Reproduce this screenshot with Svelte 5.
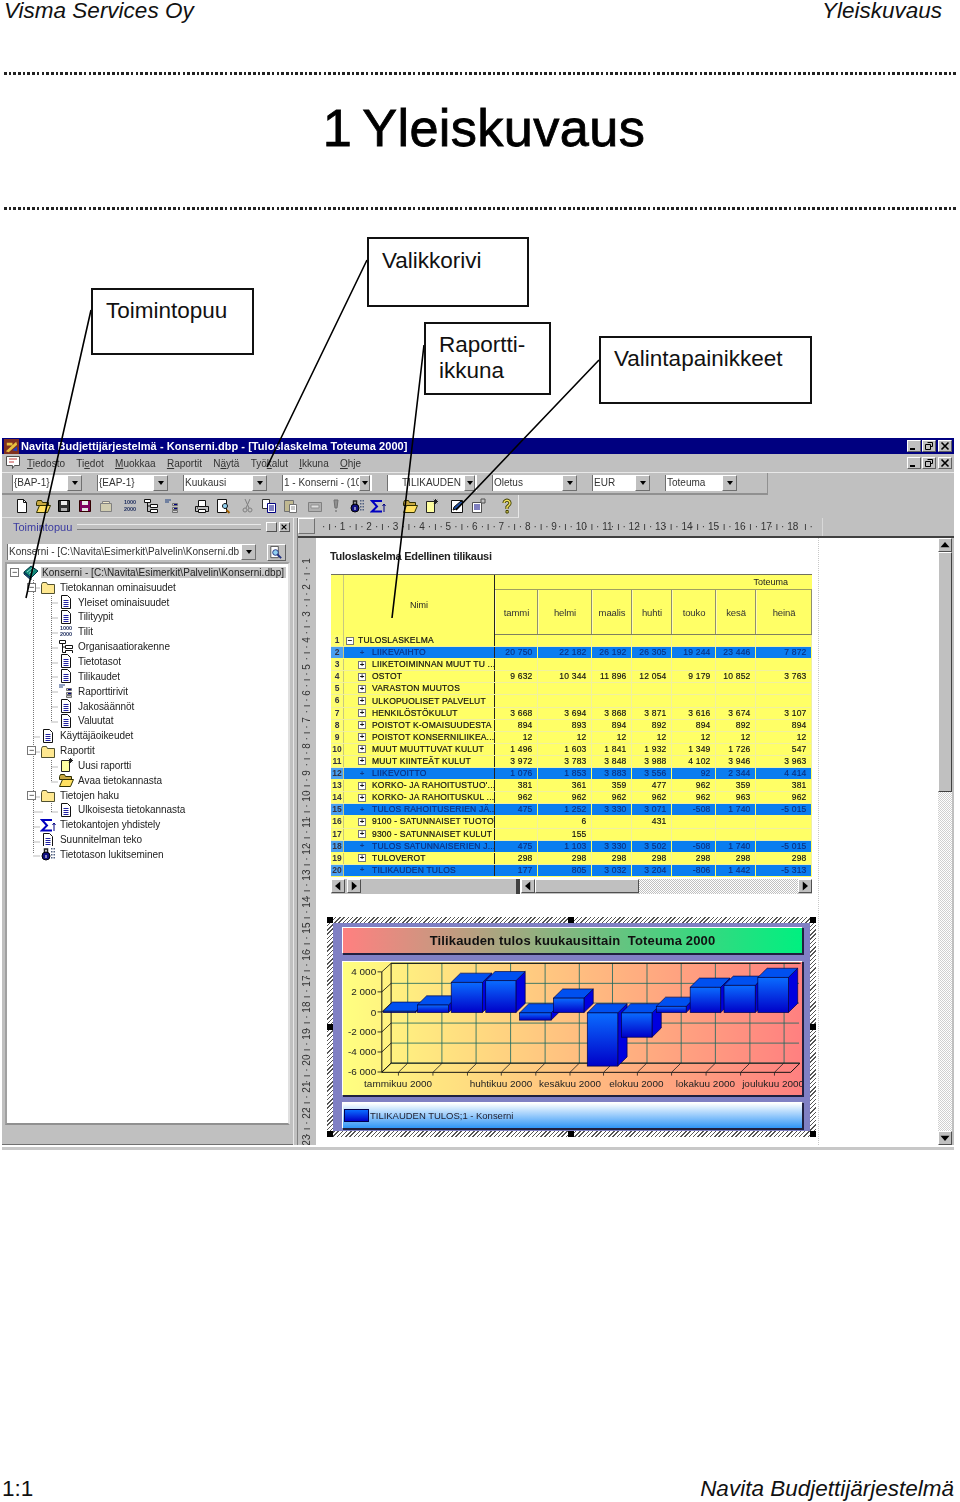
<script>
  const I = {
    doc: [["M3.5 1.5h6l3 3v10h-9z","#fff","#111"],["M5.5 6.5h5M5.5 8.5h5M5.5 10.5h5M5.5 12.5h5","none","#2020a0"]],
    blank: [["M3.5 1.5h6l3 3v10h-9z","#fff","#111"],["M9.5 1.5v3h3","none","#111"]],
    folder: [["M1.5 5.5l1-2h4l1 2h7v9h-13z","#ffe890","#505030"]],
    book: [["M1 8l7-6 7 5-7 7z","#108878","#003040"],["M1 8l7 6v2l-7-6z","#205090","#003040"],["M4 8l5-4M6 9.5l5-4","none","#90e0d0"]],
    sigma: [["M12 3H2l5 5.5L2 13.5h10","none","#0000c0",2],["M14 14V6M12.5 8l1.5-2 1.5 2","none","#000080"]],
    org: [["M1.5 1.5h6v3h-6z","#fff","#111"],["M7.5 6.5h7v3h-7zM7.5 11.5h7v3h-7z","#fff","#111"],["M4.5 4.5v9h3M4.5 8h3","none","#111"]],
    rows: [["M1 2h6M1 4h4","none","#204080"],["M8.5 5.5h5v2h-5zM8.5 9.5h5v2h-5zM8.5 12.5h5v2h-5z","#d0d0d0","#707070"],["M10 6h3v1h-3zM10 10h3v1h-3z","#000080","none"]],
    newrep: [["M3.5 3.5h8v11h-8z","#ffffa0","#222"],["M12.5 1v5M10 3.5h5M10.8 1.8l3.4 3.4M14.2 1.8l-3.4 3.4","none","#222"]],
    openf: [["M1.5 4.5l1-2h4l1 2h6v3h-12z","#c8a840","#303000"],["M1.5 14.5l3-7h11l-3 7z","#ffe060","#303000"]],
    lock: [["M2 10a4 4 0 1 0 8 0a4 4 0 1 0-8 0z","#101080","#000"],["M4.5 6V3h3v3","none","#202020",1.5],["M11 2h1.5v1.5H11zM13.5 2H15v1.5h-1.5zM11 5h1.5v1.5H11zM13.5 5H15v1.5h-1.5zM11 8h1.5v1.5H11zM13.5 8H15v1.5h-1.5zM11 11h1.5v1.5H11zM13.5 11H15v1.5h-1.5z","#506080","none"],["M5.5 9h1v3h-1z","#fff","none"]],
    save: [["M2.5 2.5h11v11h-11z","#303030","#000"],["M5 3h6v4H5z","#e8e8e8","none"],["M5 10h6v3H5z","#b0b0b0","none"]],
    save2: [["M2.5 2.5h11v11h-11z","#800060","#300"],["M5 3h6v4H5z","#e8e8e8","none"],["M5 10h6v3H5z","#e0e0e0","none"]],
    clip: [["M2.5 5.5h11v8h-11z","#d0ccb0","#808080"],["M4.5 3.5h7v2h-7z","#f0e8c8","#808080"]],
    print: [["M1.5 8.5h13v5h-13z","#c0c0c0","#111"],["M4.5 2.5h7v6h-7zM4.5 11.5h7v3h-7z","#fff","#111"],["M3 10h1","none","#111"]],
    preview: [["M2.5 1.5h9v13h-9z","#fff","#111"],["M10 10.5a2.5 2.5 0 1 0-.01 0z","#90d0f0","#111"],["M11.5 12l3 3","none","#a06000",2]],
    cut: [["M5 1l4 9M10 1L6 10","none","#808080"],["M3 12a2 2 0 1 0 4 0a2 2 0 1 0-4 0zM8 12a2 2 0 1 0 4 0a2 2 0 1 0-4 0z","none","#808080"]],
    copy: [["M1.5 1.5h7v9h-7z","#fff","#303030"],["M6.5 5.5h8v9h-8z","#fff","#000080"],["M8 8h5M8 10h5M8 12h5","none","#000080"]],
    paste: [["M2.5 2.5h9v11h-9z","#c0b890","#707070"],["M7.5 6.5h7v8h-7z","#fff","#707070"],["M9 9h4M9 11h4","none","#909090"]],
    gray: [["M1.5 4.5h13v9h-13z","#b0b0b0","#808080"],["M4 7h8v3H4z","#e0e0e0","#909090"]],
    excl: [["M6 2h4l-1 8H7z","#909090","#707070"],["M7 12h2v2H7z","#909090","none"]],
    edit: [["M2.5 2.5h11v12h-11z","#fff","#111"],["M4 12l1-3 7-6 2 2-7 6z","#2050a0","#111"]],
    props: [["M2.5 4.5h9v10h-9z","#fff","#505050"],["M4 7h6M4 9h6M4 11h6","none","#000080"],["M11 1h4v4h-4z","#c0c0c0","#505050"]],
    help: [["M5 5a3 2.8 0 1 1 4.6 2.4L8 9v2","none","#404000",3.2],["M5 5a3 2.8 0 1 1 4.6 2.4L8 9v2","none","#f0e060",1.4],["M7 12.5h2.2v2.5H7z","#f0e060","#404000"]]
  };
  const menu = [["","T","iedosto"],["Ti","e","dot"],["","M","uokkaa"],["","R","aportit"],["N","ä","ytä"],["Työ","k","alut"],["","I","kkuna"],["","O","hje"]];
  const combos = [["{BAP-1}",70],["{EAP-1}",71],["Kuukausi",84],["1 - Konserni - (10",90,"","nar"],["TILIKAUDEN",90,"pad","nar"],["Oletus",85],["EUR",58],["Toteuma",72]];
  const tools = [
    [0,["blank","openf","save","save2","clip"]],
    [8,["nums","org","rows"]],
    [14,["print","preview"]],
    [9,["cut","copy","paste"]],
    [9,["gray","excl","lock","sigma"]],
    [16,["openf","newrep"]],
    [10,["edit","props"]],
    [13,["help"]]
  ];
  const tree = [
    [0,"book","Konserni - [C:\\Navita\\Esimerkit\\Palvelin\\Konserni.dbp]",1],
    [1,"folder","Tietokannan ominaisuudet",1],
    [2,"doc","Yleiset ominaisuudet"],
    [2,"doc","Tilityypit"],
    [2,"nums","Tilit"],
    [2,"org","Organisaatiorakenne"],
    [2,"doc","Tietotasot"],
    [2,"doc","Tilikaudet"],
    [2,"rows","Raporttirivit"],
    [2,"doc","Jakosäännöt"],
    [2,"doc","Valuutat"],
    [1,"doc","Käyttäjäoikeudet"],
    [1,"folder","Raportit",1],
    [2,"newrep","Uusi raportti"],
    [2,"openf","Avaa tietokannasta"],
    [1,"folder","Tietojen haku",1],
    [2,"doc","Ulkoisesta tietokannasta"],
    [1,"sigma","Tietokantojen yhdistely"],
    [1,"doc","Suunnitelman teko"],
    [1,"lock","Tietotason lukitseminen"]
  ];
  const months = ["tammi","helmi","maalis","huhti","touko","kesä","heinä"];
  const rows = [
    ["TULOSLASKELMA",[],0,1],
    ["LIIKEVAIHTO",["20 750","22 182","26 192","26 305","19 244","23 446","7 872"],1],
    ["LIIKETOIMINNAN MUUT TU ...",[]],
    ["OSTOT",["9 632","10 344","11 896","12 054","9 179","10 852","3 763"]],
    ["VARASTON MUUTOS",[]],
    ["ULKOPUOLISET PALVELUT",[]],
    ["HENKILÖSTÖKULUT",["3 668","3 694","3 868","3 871","3 616","3 674","3 107"]],
    ["POISTOT K-OMAISUUDESTA",["894","893","894","892","894","892","894"]],
    ["POISTOT KONSERNILIIKEA...",["12","12","12","12","12","12","12"]],
    ["MUUT MUUTTUVAT KULUT",["1 496","1 603","1 841","1 932","1 349","1 726","547"]],
    ["MUUT KIINTEÄT KULUT",["3 972","3 783","3 848","3 988","4 102","3 946","3 963"]],
    ["LIIKEVOITTO",["1 076","1 853","3 883","3 556","92","2 344","4 414"],1],
    ["KORKO- JA RAHOITUSTUO'...",["381","361","359","477","962","359","381"]],
    ["KORKO- JA RAHOITUSKUL ...",["962","962","962","962","962","963","962"]],
    ["TULOS RAHOITUSERIEN JÄ...",["475","1 252","3 330","3 071","-508","1 740","-5 015"],1],
    ["9100 - SATUNNAISET TUOTOT",["","6","","431"]],
    ["9300 - SATUNNAISET KULUT",["","155"]],
    ["TULOS SATUNNAISERIEN J...",["475","1 103","3 330","3 502","-508","1 740","-5 015"],1],
    ["TULOVEROT",["298","298","298","298","298","298","298"]],
    ["TILIKAUDEN TULOS",["177","805","3 032","3 204","-806","1 442","-5 313"],1]
  ];
  const bars = [[187,285,333,337],[290,384,314,337],[392,486,245,337],[496,587,240,337],[598,693,338,360],[700,792,293,337],[802,894,338,500],[905,997,338,412],[1010,1100,318,337],[1112,1204,260,337],[1214,1308,254,337],[1316,1408,230,337]];
  const yLabels = [["4 000",222],["2 000",284],["0",346],["-2 000",406],["-4 000",466],["-6 000",528]];
  const xLabels = [["tammikuu 2000",232],["huhtikuu 2000",542],["kesäkuu 2000",750],["elokuu 2000",950],["lokakuu 2000",1158],["joulukuu 2000",1362]];
  const vx = [261,364,467,571,675,778,878,982,1085,1188,1292,1395];
  const hy = [187,248,308,369,430,491];
  const fx = [233,337,441,543,647,750,851,953,1056,1160,1264,1366];
  const treeGuides = "M26.5 14V290M26.5 24H36M26.5 173H36M26.5 188H36M26.5 233H36M26.5 248H36M26.5 263H36M26.5 278H36M26.5 292H36M44.5 30V158M44.5 39H54M44.5 54H54M44.5 69H54M44.5 84H54M44.5 99H54M44.5 113H54M44.5 128H54M44.5 143H54M44.5 158H54M44.5 188V218M44.5 203H54M44.5 218H54M44.5 233V248M44.5 248H54";
</script>

{#snippet icon(k)}
  {#if k === "nums"}
    <span class="nums">1000<br />2000</span>
  {:else}
    <svg class="ico" viewBox="0 0 16 16" aria-hidden="true">
      {#each I[k] as [d, fill, stroke, w]}
        <path {d} {fill} {stroke} stroke-width={w || 1} />
      {/each}
    </svg>
  {/if}
{/snippet}

{#snippet winbtns()}
  <div class="winbtns">
    <span class="wb"><svg viewBox="0 0 12 10"><path d="M2 8h5" stroke="#000" stroke-width="2" /></svg></span>
    <span class="wb"><svg viewBox="0 0 12 10"><path d="M4.5 1.5h5v4h-2M2.5 3.5h5v5h-5z" fill="none" stroke="#000" /></svg></span>
    <span class="wb x"><svg viewBox="0 0 12 10"><path d="M2.5 1.5l7 7M9.5 1.5l-7 7" fill="none" stroke="#000" stroke-width="1.6" /></svg></span>
  </div>
{/snippet}

{#snippet arrowbtn()}
  <span class="arrow"><svg viewBox="0 0 8 5"><path d="M1 0h6L4 4z" fill="#000" /></svg></span>
{/snippet}

<div class="page">
  <header class="head">
    <span>Visma Services Oy</span>
    <span>Yleiskuvaus</span>
  </header>
  <div class="dots"></div>
  <h1>1 Yleiskuvaus</h1>
  <div class="dots"></div>
  <div class="calloutspace"></div>

  <section class="shot">
    <div class="titlebar">
      <svg class="appico" viewBox="0 0 16 16"><path d="M0 0h16v16H0z" fill="#803020" /><path d="M2 13L13 3l1 3-9 8zM3 4h6v3H3z" fill="#e8c040" /><path d="M9 12l5-4v5z" fill="#2040c0" /></svg>
      <span class="ttl">Navita Budjettijärjestelmä - Konserni.dbp - [Tuloslaskelma Toteuma 2000]</span>
      {@render winbtns()}
    </div>
    <div class="menubar">
      <svg class="docico" viewBox="0 0 16 16"><path d="M1.5 1.5h13v9h-5l-2 3v-3h-6z" fill="#fff" stroke="#505050" /><path d="M4 4h8M4 7h5" stroke="#c04040" /></svg>
      <nav class="menu">
        {#each menu as [a, b, c]}
          <span>{a}<u>{b}</u>{c}</span>
        {/each}
      </nav>
      {@render winbtns()}
    </div>
    <div class="bars">
      <div class="bar1">
        {#each combos as [t, w, p, n]}
          <div class="combo" class:nar={n} style:width="{w}px">
            <span class="cval" class:pad={p}>{t}</span>
            {@render arrowbtn()}
          </div>
        {/each}
      </div>
      <div class="bar2">
        {#each tools as [m, list]}
          <div class="tgroup" style:margin-left="{m}px">
            {#each list as k}{@render icon(k)}{/each}
          </div>
        {/each}
      </div>
    </div>

    <div class="body">
      <aside class="left">
        <div class="dockhead">
          <span class="docktitle">Toimintopuu</span>
          <span class="grip"></span>
          <span class="mini"></span>
          <span class="mini"><svg viewBox="0 0 10 10"><path d="M2 2l6 6M8 2l-6 6" stroke="#000" stroke-width="1.5" /></svg></span>
        </div>
        <div class="dockcombo">
          <div class="combo wide">
            <span class="cval">Konserni - [C:\Navita\Esimerkit\Palvelin\Konserni.db</span>
            {@render arrowbtn()}
          </div>
          <span class="searchbtn">
            <svg viewBox="0 0 16 16"><path d="M3 1.5h8v12H3z" fill="#fff" stroke="#505050" /><circle cx="8" cy="8" r="3" fill="#90d0f0" stroke="#203080" /><path d="M10 10l4 4" stroke="#203080" stroke-width="2" /></svg>
          </span>
        </div>
        <div class="tree">
          <svg class="guides" viewBox="0 0 285 560"><path d={treeGuides} fill="none" stroke="#777" stroke-dasharray="1 1" /></svg>
          {#each tree as [lvl, k, text, exp]}
            <div class="tnode l{lvl}">
              <span class="exp" class:on={exp}>{exp ? "−" : ""}</span>
              {@render icon(k)}
              <span class="tlabel" class:sel={lvl === 0}>{text}</span>
            </div>
          {/each}
        </div>
        <div class="statusfill"></div>
      </aside>

      <div class="split"></div>

      <main class="right">
        <div class="rulerrow">
          <span class="corner"></span>
          <div class="hruler">
            {#each Array.from({ length: 18 }, (_, i) => i + 1) as n}
              <span>· ı · {n}</span>
            {/each}
            <span class="tail">ı ·</span>
          </div>
        </div>
        <div class="work">
          <div class="vruler">
            {#each Array.from({ length: 23 }, (_, i) => i + 1) as n}
              <span>· ı · {n}</span>
            {/each}
          </div>
          <div class="doc">
            <div class="sheet">
              <div class="rtitle">Tuloslaskelma Edellinen tilikausi</div>
              <div class="rep">
                <div class="rephead">
                  <div class="hnum"></div>
                  <div class="hname">Nimi</div>
                  <div class="hright">
                    <div class="hband">Toteuma</div>
                    <div class="hmonths">
                      {#each months as m}<span>{m}</span>{/each}
                    </div>
                  </div>
                </div>
                {#each rows as [name, vals, blue, top], i}
                  <div class="row" class:blue>
                    <span class="num">{i + 1}</span>
                    <span class="name" class:top>
                      <span class="box">{top ? "−" : "+"}</span><span class="nm">{name}</span>
                    </span>
                    {#each months as _, c}
                      <span class="val">{vals[c] || ""}</span>
                    {/each}
                  </div>
                {/each}
              </div>
              <div class="hscroll">
                <span class="sb"><svg viewBox="0 0 8 8"><path d="M5.5 1v6L2 4z" /></svg></span>
                <span class="sb"><svg viewBox="0 0 8 8"><path d="M2.5 1v6L6 4z" /></svg></span>
                <span class="trk"></span>
                <span class="splitbar"></span>
                <span class="sb"><svg viewBox="0 0 8 8"><path d="M5.5 1v6L2 4z" /></svg></span>
                <span class="thumb"></span>
                <span class="dither"></span>
                <span class="sb"><svg viewBox="0 0 8 8"><path d="M2.5 1v6L6 4z" /></svg></span>
              </div>

              <div class="chartframe">
                <span class="h tl"></span><span class="h tc"></span><span class="h tr"></span>
                <span class="h ml"></span><span class="h mr"></span>
                <span class="h bl"></span><span class="h bc"></span><span class="h br"></span>
                <div class="chartin">
                  <div class="cpanel ctitle">Tilikauden tulos kuukausittain&nbsp; Toteuma 2000</div>
                  <div class="cpanel cplot">
                    <svg viewBox="66 183 1383 405" preserveAspectRatio="none">
                      <defs>
                        <linearGradient id="barf" x1="0" y1="0" x2="0" y2="1">
                          <stop offset="0" stop-color="#0a6cff" /><stop offset="1" stop-color="#0000c8" />
                        </linearGradient>
                      </defs>
                      {#each hy as y}
                        <path d="M211 {y}H1440" stroke="#1d6a60" stroke-width="2.5" fill="none" />
                      {/each}
                      {#each vx as x}
                        <path d="M{x} 187V491" stroke="#1d6a60" stroke-width="2.5" fill="none" />
                      {/each}
                      {#each hy as y, i}
                        <path d="M183 {213 + i * 61}L211 {y}" stroke="#111" stroke-width="2.5" fill="none" />
                        <path d="M170 {213 + i * 61}H183" stroke="#111" stroke-width="2.5" fill="none" />
                      {/each}
                      <path d="M211 187V491L183 519V213M183 519H1415L1443 491H211" stroke="#111" stroke-width="3" fill="none" />
                      <path d="M211 187H1445" stroke="#111" stroke-width="3" fill="none" />
                      {#each fx as x}
                        <path d="M{x} 529V519L{x + 28} 491" stroke="#222" stroke-width="2.5" fill="none" />
                      {/each}
                      {#each bars as [x1, x2, y1, y2]}
                        <path d="M{x2} {y1}l28-28V{y2 - 28}l-28 28z" fill="#0000e0" stroke="#000040" stroke-width="2" />
                        <path d="M{x1} {y1}l28-28H{x2 + 28}l-28 28z" fill="#0050f0" stroke="#000040" stroke-width="2" />
                        <rect x={x1} y={y1} width={x2 - x1} height={y2 - y1} fill="url(#barf)" stroke="#000040" stroke-width="2" />
                      {/each}
                      {#each yLabels as [t, y]}
                        <text x="166" {y} text-anchor="end" class="ct">{t}</text>
                      {/each}
                      {#each xLabels as [t, x]}
                        <text {x} y="563" text-anchor="middle" class="ct">{t}</text>
                      {/each}
                    </svg>
                  </div>
                  <div class="cpanel clegend">
                    <span class="swatch"></span>
                    <span>TILIKAUDEN TULOS;1 - Konserni</span>
                  </div>
                </div>
              </div>
            </div>
          </div>
          <div class="vscroll">
            <span class="sb"><svg viewBox="0 0 8 8"><path d="M1 5.5h6L4 2z" /></svg></span>
            <span class="vthumb"></span>
            <span class="vtrack"></span>
            <span class="sb"><svg viewBox="0 0 8 8"><path d="M1 2.5h6L4 6z" /></svg></span>
          </div>
        </div>
      </main>
    </div>
    <div class="strip"></div>
  </section>

  <div class="spacer"></div>
  <footer class="foot">
    <span>1:1</span>
    <em>Navita Budjettijärjestelmä</em>
  </footer>

  <svg class="leaders" viewBox="0 0 960 1502" aria-hidden="true">
    <path d="M91 310L26 598M367 260L267 467M424 345L392 618M599 360L456 510" fill="none" stroke="#000" stroke-width="1.6" />
  </svg>
  <div class="callout c1">Toimintopuu</div>
  <div class="callout c2">Valikkorivi</div>
  <div class="callout c3">Raportti-<br />ikkuna</div>
  <div class="callout c4">Valintapainikkeet</div>
</div>

<style>
  :global(body) { margin: 0; background: #fff; }
  .page {
    position: relative;
    width: 960px;
    height: 1502px;
    overflow: hidden;
    background: #fff;
    color: #000;
    font-family: "Liberation Sans", Arial, sans-serif;
  }
  .head {
    height: 72px;
    box-sizing: border-box;
    padding: 0 18px 0 4px;
    display: flex;
    justify-content: space-between;
    font-size: 22.5px;
    line-height: 22px;
    font-style: italic;
    color: #111;
  }
  .dots {
    height: 3px;
    margin: 0 2px 0 4px;
    background: repeating-linear-gradient(90deg, #222 0 2.6px, transparent 2.6px 4.7px);
  }
  h1 {
    margin: 0;
    height: 132px;
    box-sizing: border-box;
    padding: 25px 0 0 8px;
    font-size: 52.3px;
    font-weight: 400;
    line-height: 56px;
    text-align: center;
    word-spacing: -4px;
    letter-spacing: 0.35px;
    -webkit-text-stroke: 0.8px #000;
  }
  .calloutspace { height: 228px; }

  .shot {
    margin-left: 2px;
    width: 952px;
    height: 712px;
    display: flex;
    flex-direction: column;
    background: #c0c0c0;
    filter: blur(0.4px);
    font-size: 10px;
    color: #222;
  }
  .titlebar {
    height: 16px;
    flex: none;
    background: #000080;
    display: flex;
    align-items: center;
    padding-left: 2px;
    box-sizing: border-box;
  }
  .appico { width: 15px; height: 15px; margin-right: 2px; }
  .ttl {
    color: #fff;
    font-weight: 700;
    font-size: 11px;
    letter-spacing: 0.05px;
    white-space: nowrap;
  }
  .winbtns { margin-left: auto; display: flex; gap: 1px; margin-right: 2px; }
  .wb {
    width: 14px;
    height: 12px;
    background: #c0c0c0;
    box-sizing: border-box;
    border: 1px solid;
    border-color: #fff #606060 #606060 #fff;
    display: flex;
  }
  .wb.x { margin-left: 1px; }
  .wb svg { width: 100%; height: 100%; }
  .menubar {
    height: 19px;
    flex: none;
    display: flex;
    align-items: center;
    padding-left: 3px;
    box-sizing: border-box;
    border-bottom: 1px solid #e8e8e8;
  }
  .docico { width: 16px; height: 16px; }
  .menu {
    display: flex;
    gap: 11.3px;
    margin-left: 6px;
    font-size: 10px;
    white-space: nowrap;
    color: #333;
    padding-top: 1px;
  }
  .bars { flex: none; height: 45px; position: relative; }
  .bar1 {
    width: 766px;
    height: 22px;
    box-sizing: border-box;
    padding: 2px 0 0 10px;
    display: flex;
    gap: 15px;
    border-bottom: 2px solid #909090;
    border-right: 1px solid #909090;
  }
  .combo {
    height: 16px;
    flex: none;
    box-sizing: border-box;
    display: flex;
    background: #fff;
    border-left: 1px solid #707070;
    position: relative;
  }
  .combo.wide { width: 249px; }
  .cval {
    flex: 1;
    min-width: 0;
    overflow: hidden;
    white-space: nowrap;
    font-size: 10px;
    line-height: 16px;
    padding-left: 1px;
    color: #333;
  }
  .cval.pad { padding-left: 14px; }
  .arrow {
    flex: none;
    width: 15px;
    height: 16px;
    background: #c0c0c0;
    box-sizing: border-box;
    border: 1px solid;
    border-color: #fff #707070 #707070 #fff;
    display: flex;
    align-items: center;
    justify-content: center;
  }
  .nar .arrow { width: 11px; margin-right: 2px; }
  .arrow svg { width: 8px; height: 5px; }
  .bar2 {
    width: 517px;
    height: 23px;
    box-sizing: border-box;
    padding: 3px 0 0 12px;
    display: flex;
    border-bottom: 1px solid #e0e0e0;
    border-right: 1px solid #e8e8e8;
  }
  .tgroup { display: flex; gap: 5px; }
  .ico { width: 16px; height: 16px; flex: none; }
  .nums {
    width: 16px;
    height: 16px;
    flex: none;
    font-size: 5.5px;
    font-weight: 700;
    line-height: 6.5px;
    text-align: center;
    color: #203060;
    padding-top: 1px;
    box-sizing: border-box;
  }

  .body { flex: 1; min-height: 0; display: flex; }
  .left { width: 291px; flex: none; display: flex; flex-direction: column; }
  .dockhead {
    height: 18px;
    flex: none;
    display: flex;
    align-items: center;
    padding: 0 3px 0 11px;
    gap: 2px;
  }
  .docktitle { font-size: 11px; color: #3a3aa0; }
  .grip {
    flex: 1;
    height: 4px;
    margin: 0 3px;
    border-top: 1px solid #e8e8e8;
    border-bottom: 1px solid #808080;
  }
  .mini {
    width: 11px;
    height: 10px;
    box-sizing: border-box;
    border: 1px solid;
    border-color: #fff #505050 #505050 #fff;
    display: flex;
  }
  .dockcombo {
    height: 26px;
    flex: none;
    box-sizing: border-box;
    padding: 8px 0 0 5px;
    display: flex;
  }
  .searchbtn {
    width: 19px;
    height: 17px;
    margin-left: 11px;
    box-sizing: border-box;
    border: 1px solid;
    border-color: #fff #606060 #606060 #fff;
    display: flex;
  }
  .tree {
    position: relative;
    margin-left: 3px;
    flex: none;
    height: 563px;
    width: 285px;
    box-sizing: border-box;
    padding-top: 1px;
    background: #fff;
    border: 2px solid;
    border-color: #a0a0a0 #e0e0e0 #909090 #a0a0a0;
  }
  .guides { position: absolute; inset: 0 auto auto 0; width: 285px; height: 560px; }
  .tnode {
    position: relative;
    height: 14.85px;
    display: flex;
    align-items: center;
    font-size: 10px;
    letter-spacing: -0.05px;
    white-space: nowrap;
    color: #222;
  }
  .tnode .ico, .tnode .nums { background: #fff; }
  .l0 { padding-left: 3px; }
  .l1 { padding-left: 20px; }
  .l2 { padding-left: 38px; }
  .exp {
    width: 9px;
    height: 9px;
    margin-right: 4px;
    flex: none;
    box-sizing: border-box;
    font-size: 9px;
    line-height: 7px;
    text-align: center;
    color: #111;
  }
  .exp.on { border: 1px solid #777; background: #fff; }
  .tlabel { margin-left: 4px; }
  .tlabel.sel { background: #c8c8c8; padding: 0 2px 0 1px; margin-left: 2px; letter-spacing: 0.07px; }
  .statusfill { flex: 1; border-bottom: 1px solid #707070; }
  .split {
    width: 5px;
    flex: none;
    border-right: 1px solid #808080;
    border-left: 1px solid #e8e8e8;
    box-sizing: border-box;
  }

  .right { flex: 1; min-width: 0; display: flex; flex-direction: column; }
  .rulerrow { height: 18px; flex: none; display: flex; }
  .corner {
    width: 17px;
    height: 16px;
    box-sizing: border-box;
    border: 1px solid;
    border-color: #fff #707070 #707070 #fff;
    margin-right: 5px;
  }
  .hruler { display: flex; font-size: 10px; line-height: 18px; color: #333; width: 502px; border-right: 1px solid #d8d8d8; white-space: nowrap; }
  .hruler span { width: 26.45px; text-align: right; flex: none; padding-right: 1px; box-sizing: border-box; }
  .hruler .tail { width: 18px; }
  .work { flex: 1; min-height: 0; display: flex; border-top: 2px solid #404040; border-left: 0; }
  .vruler {
    width: 18px;
    flex: none;
    box-sizing: border-box;
    padding-top: 17px;
    display: flex;
    flex-direction: column;
    overflow: hidden;
    font-size: 10px;
    color: #333;
  }
  .vruler span {
    height: 26.45px;
    flex: none;
    writing-mode: vertical-rl;
    transform: rotate(180deg);
    text-align: left;
    white-space: nowrap;
    line-height: 18px;
  }
  .doc { flex: 1; min-width: 0; background: #fff; overflow: hidden; }
  .sheet {
    width: 503px;
    height: 100%;
    box-sizing: border-box;
    padding: 12px 0 0 15px;
    border-right: 1px dotted #c8c8c8;
  }
  .rtitle {
    margin-left: -1px;
    height: 24px;
    font-size: 11px;
    line-height: 13px;
    font-weight: 700;
    letter-spacing: -0.28px;
    color: #222;
  }
  .rep {
    --cols: 13px 151px 43px 54px 40px 40px 44px 40px 56px;
    width: 481px;
    background: #ffff66;
    border-top: 1px solid #707060;
    font-size: 8.5px;
  }
  .rephead { display: flex; height: 60px; }
  .hnum { width: 13px; flex: none; border-right: 1px solid #c8c880; box-sizing: border-box; }
  .hname {
    width: 151px;
    flex: none;
    box-sizing: border-box;
    text-align: center;
    padding-top: 25px;
    font-size: 9px;
    border-right: 1px solid #222;
  }
  .hright { flex: 1; display: flex; flex-direction: column; }
  .hband {
    height: 14px;
    text-align: right;
    font-size: 9px;
    line-height: 14px;
    padding-right: 24px;
    border-bottom: 1px solid #a0a060;
  }
  .hmonths {
    flex: 1;
    display: grid;
    grid-template-columns: 43px 54px 40px 40px 44px 40px 1fr;
    border-bottom: 1px solid #808060;
  }
  .hmonths span {
    display: flex;
    align-items: center;
    justify-content: center;
    font-size: 9.5px;
    border-right: 1px solid #909070;
    border-left: 1px solid #fffbb0;
    letter-spacing: -0.1px;
    color: #333;
  }
  .row {
    display: grid;
    grid-template-columns: var(--cols);
    height: 12.1px;
    box-sizing: border-box;
    border-bottom: 1px solid #f0f0a0;
    line-height: 11px;
    color: #111;
  }
  .row.blue { background: #0a7df0; color: #0c3080; border-bottom-color: #ffff66; }
  .num {
    text-align: center;
    font-weight: 700;
    font-size: 8.5px;
    color: #334;
    background: #ffff70;
    border-right: 1px solid #c8c880;
  }
  .row.blue .num { background: #4aa0f0; }
  .name {
    display: flex;
    align-items: center;
    padding-left: 14px;
    border-right: 1px solid #222;
    white-space: nowrap;
    overflow: hidden;
  }
  .name.top { padding-left: 2px; }
  .box {
    width: 8px;
    height: 8px;
    flex: none;
    box-sizing: border-box;
    border: 1px solid #777;
    background: #fff;
    line-height: 6px;
    font-size: 8px;
    font-weight: 700;
    text-align: center;
    color: #111;
  }
  .blue .box { border-color: transparent; background: transparent; color: #103a88; }
  .nm { margin-left: 6px; letter-spacing: 0.2px; -webkit-text-stroke: 0.2px currentColor; }
  .name.top .nm { margin-left: 4px; }
  .val {
    text-align: right;
    padding-right: 4.5px;
    border-right: 1px solid #f0f0a0;
    letter-spacing: 0.2px;
    -webkit-text-stroke: 0.15px currentColor;
  }
  .blue .val { border-right-color: #ffff66; }
  .hscroll {
    width: 481px;
    height: 15px;
    margin-top: 2px;
    display: flex;
    background: #c0c0c0;
  }
  .sb {
    width: 14px;
    height: 14px;
    flex: none;
    box-sizing: border-box;
    background: #c0c0c0;
    border: 1px solid;
    border-color: #fff #505050 #505050 #fff;
    display: flex;
  }
  .hscroll .sb:nth-child(2) { margin-left: 2px; }
  .trk { width: 155px; flex: none; }
  .splitbar { width: 5px; flex: none; background: #404040; border-right: 1px solid #fff; box-sizing: border-box; }
  .thumb { width: 104px; flex: none; border: 1px solid; border-color: #fff #505050 #505050 #fff; box-sizing: border-box; height: 14px; }
  .dither {
    flex: 1;
    background: repeating-conic-gradient(#fff 0 25%, #c0c0c0 0 50%) 0 0 / 2px 2px;
  }
  .chartframe {
    position: relative;
    width: 489px;
    height: 220px;
    margin: 23px 0 0 -4px;
    box-sizing: border-box;
    padding: 6px;
    background: repeating-linear-gradient(135deg, #555 0 1px, #fff 1px 3px);
  }
  .h { position: absolute; width: 6px; height: 6px; background: #000; }
  .tl { left: 0; top: 0; } .tc { left: 241px; top: 0; } .tr { right: 0; top: 0; }
  .ml { left: 0; top: 107px; } .mr { right: 0; top: 107px; }
  .bl { left: 0; bottom: 0; } .bc { left: 241px; bottom: 0; } .br { right: 0; bottom: 0; }
  .chartin {
    height: 100%;
    box-sizing: border-box;
    padding: 4px 7px 3px 9px;
    background: #8080c4;
    display: flex;
    flex-direction: column;
  }
  .cpanel {
    box-sizing: border-box;
    border: 1px solid #fff;
    border-right-color: #202040;
    border-bottom-color: #202040;
    box-shadow: 1px 1px 0 #202040;
    flex: none;
  }
  .ctitle {
    height: 27px;
    margin-bottom: 7px;
    background: linear-gradient(90deg, #ff8080, #00f080);
    text-align: center;
    font-weight: 700;
    font-size: 13px;
    line-height: 25px;
    letter-spacing: 0.15px;
    color: #111;
    white-space: nowrap;
  }
  .cplot {
    height: 135px;
    margin-bottom: 6px;
    background: linear-gradient(90deg, #ffff80, #ff8080);
    overflow: hidden;
  }
  .cplot svg { display: block; width: 459px; height: 133px; }
  .ct { font-size: 30px; fill: #222; }
  .clegend {
    height: 27px;
    background: linear-gradient(180deg, #fff, #3096f8);
    display: flex;
    align-items: center;
    gap: 1px;
    padding-left: 1px;
    font-size: 9.5px;
    letter-spacing: -0.02px;
    color: #223;
    white-space: nowrap;
  }
  .swatch {
    width: 25px;
    height: 13px;
    background: linear-gradient(180deg, #0a6cff, #0000c8);
    border: 1px solid #000050;
    box-sizing: border-box;
  }
  .vscroll {
    width: 14px;
    margin: 0 2px 0 0;
    flex: none;
    display: flex;
    flex-direction: column;
    background: #e8e8e8;
  }
  .vthumb {
    height: 240px;
    flex: none;
    box-sizing: border-box;
    background: #c0c0c0;
    border: 1px solid;
    border-color: #fff #404040 #404040 #fff;
  }
  .vtrack {
    flex: 1;
    background: repeating-conic-gradient(#fff 0 25%, #d0d0d0 0 50%) 0 0 / 2px 2px;
  }
  .strip { height: 5px; flex: none; background: #fff; border-bottom: 3px solid #c8c8c8; box-sizing: border-box; }
  .spacer { height: 325px; }
  .foot {
    height: 27px;
    box-sizing: border-box;
    padding: 0 6px 0 2px;
    display: flex;
    justify-content: space-between;
    font-size: 22.5px;
    line-height: 27px;
    color: #111;
  }
  .leaders { position: absolute; inset: 0; width: 960px; height: 1502px; pointer-events: none; }
  .callout {
    position: absolute;
    box-sizing: border-box;
    background: #fff;
    border: 2px solid #111;
    font-size: 22.5px;
    line-height: 26px;
    padding: 8px 0 0 13px;
    color: #111;
  }
  .c1 { left: 91px; top: 288px; width: 163px; height: 67px; }
  .c2 { left: 367px; top: 237px; width: 162px; height: 70px; padding-top: 9px; }
  .c3 { left: 424px; top: 322px; width: 127px; height: 73px; }
  .c4 { left: 599px; top: 336px; width: 213px; height: 68px; }
</style>
